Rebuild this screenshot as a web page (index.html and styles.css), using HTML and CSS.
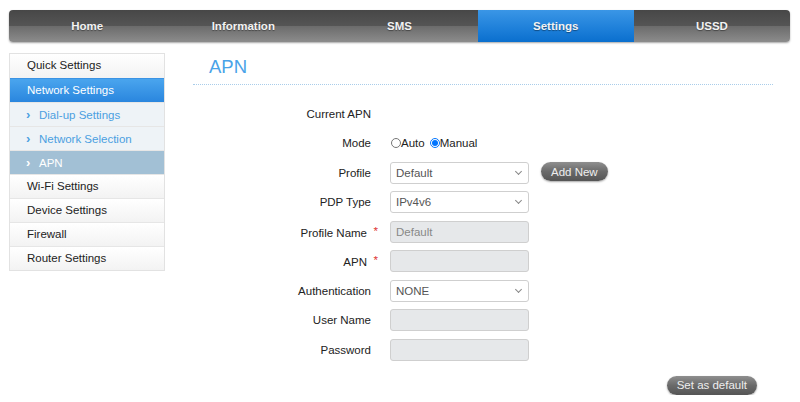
FILE: index.html
```html
<!DOCTYPE html>
<html lang="en">
<head>
  <meta charset="UTF-8">
  <meta name="viewport" content="width=device-width, initial-scale=1.0">
  <title>APN</title>
  <link rel="stylesheet" href="styles.css">
</head>
<body>

  <ul class="nav">
    <li>Home</li>
    <li>Information</li>
    <li>SMS</li>
    <li class="active">Settings</li>
    <li>USSD</li>
  </ul>

  <div class="page">
    <ul class="side">
      <li class="item">Quick Settings</li>
      <li class="item open">Network Settings</li>
      <li class="sub"><span class="arrow">›</span>Dial-up Settings</li>
      <li class="sub"><span class="arrow">›</span>Network Selection</li>
      <li class="sub current"><span class="arrow">›</span>APN</li>
      <li class="item">Wi-Fi Settings</li>
      <li class="item">Device Settings</li>
      <li class="item">Firewall</li>
      <li class="item">Router Settings</li>
    </ul>

    <div class="content">
      <h1>APN</h1>

      <div class="form">
        <div class="row">
          <label>Current APN</label>
          <span></span>
        </div>
        <div class="row">
          <label>Mode</label>
          <div class="radios">
            <input type="radio" name="mode" id="auto"><span>Auto</span>
            <input type="radio" name="mode" id="manual" checked><span>Manual</span>
          </div>
        </div>
        <div class="row">
          <label>Profile</label>
          <div class="field">
            <span class="select"><select><option>Default</option></select></span>
            <button class="btn add">Add New</button>
          </div>
        </div>
        <div class="row">
          <label>PDP Type</label>
          <span class="select"><select><option>IPv4v6</option></select></span>
        </div>
        <div class="row">
          <label>Profile Name<i class="req">*</i></label>
          <input type="text" value="Default" disabled>
        </div>
        <div class="row">
          <label>APN<i class="req">*</i></label>
          <input type="text" disabled>
        </div>
        <div class="row">
          <label>Authentication</label>
          <span class="select"><select><option>NONE</option></select></span>
        </div>
        <div class="row">
          <label>User Name</label>
          <input type="text" disabled>
        </div>
        <div class="row">
          <label>Password</label>
          <input type="password" disabled>
        </div>
      </div>

      <div class="actions">
        <button class="btn">Set as default</button>
      </div>
    </div>
  </div>

</body>
</html>
```

FILE: styles.css
```css
body {
  margin: 0;
  padding: 10px 10px 0 9px;
  font-family: "Liberation Sans", Arial, sans-serif;
  font-size: 11.5px;
  color: #333;
  background: #fff;
}
ul {
  list-style: none;
  margin: 0;
  padding: 0;
}
.nav {
  display: flex;
  height: 32px;
  border-radius: 4px;
  overflow: hidden;
  background: linear-gradient(#474747, #555 50%, #6b6b6b 50%, #8c8c8c);
  box-shadow: 0 1px 2px rgba(0, 0, 0, 0.35);
}
.nav li {
  flex: 1;
  display: flex;
  align-items: center;
  justify-content: center;
  color: #f2f2f2;
  font-weight: bold;
  font-size: 11.5px;
  text-shadow: 0 1px 1px rgba(0, 0, 0, 0.4);
}
.nav li.active {
  background: linear-gradient(#3a96e6, #1d7fd9 60%, #0a6fce);
}
.page {
  display: flex;
  align-items: flex-start;
}
.side {
  width: 154px;
  margin-top: 11px;
  border: 1px solid #e2e2e2;
}
.side li {
  height: 23px;
  line-height: 23px;
  border-top: 1px solid #e6e6e6;
}
.side li:first-child {
  border-top: none;
  height: 24px;
}
.item {
  padding-left: 17px;
  background: linear-gradient(#fff, #f3f3f3);
  color: #222;
}
.item.open {
  background: linear-gradient(#4aa5ee, #2a86de);
  color: #fff;
  border-top-color: #3b93e4;
}
.sub {
  padding-left: 16px;
  background: #eef3f7;
  color: #4b9fe1;
}
.sub.current {
  background: #a2c0d5;
  color: #fff;
}
.arrow {
  display: inline-block;
  width: 13px;
  font-weight: bold;
  font-size: 13px;
}
.content {
  flex: 1;
  padding: 0 17px 0 28px;
}
h1 {
  margin: 0;
  padding: 14px 0 0 16px;
  height: 28px;
  font-size: 18.5px;
  font-weight: normal;
  color: #4aa3e8;
  border-bottom: 1px dotted #a9cdea;
}
.form {
  margin-top: 14px;
}
.row {
  display: flex;
  align-items: center;
  height: 29.5px;
}
.row label {
  width: 178px;
  padding-right: 9px;
  text-align: right;
  color: #222;
}
.req {
  display: inline-block;
  width: 13px;
  margin-right: -9px;
  padding-right: 2px;
  box-sizing: border-box;
  text-align: right;
  color: #d33;
  font-style: normal;
  vertical-align: 2px;
}
.row label + * {
  margin-left: 10px;
}
.radios {
  display: flex;
  align-items: center;
  color: #222;
}
.radios input {
  width: 10px;
  height: 10px;
  margin: 0 0 0 1px;
}
.radios span {
  margin-right: 4px;
}
.field {
  display: flex;
  align-items: center;
}
.select {
  position: relative;
  display: inline-block;
  height: 22px;
}
.select::after {
  content: "";
  position: absolute;
  right: 8px;
  top: 7px;
  width: 4px;
  height: 4px;
  border-right: 1px solid #888;
  border-bottom: 1px solid #888;
  transform: rotate(45deg);
  pointer-events: none;
}
select,
input[type="text"],
input[type="password"] {
  box-sizing: border-box;
  width: 139px;
  height: 22px;
  padding: 0 5px;
  font-family: inherit;
  font-size: 11.5px;
  color: #555;
  border: 1px solid #cfcfcf;
  border-radius: 3px;
  background-color: #fff;
}
select {
  appearance: none;
  -webkit-appearance: none;
  margin: 0;
  display: block;
}
input:disabled {
  background: #e6e8ea;
  color: #888;
}
.btn {
  height: 19px;
  padding: 0 10px;
  border: none;
  border-radius: 10px;
  font-family: inherit;
  font-size: 11.5px;
  color: #eee;
  background: linear-gradient(#8f8f8f, #6a6a6a 50%, #555);
  box-shadow: 0 1px 2px rgba(0, 0, 0, 0.35);
}
.add {
  margin-left: 12px;
  margin-top: -2px;
}
.actions {
  display: flex;
  justify-content: flex-end;
  padding: 11px 16px 0 0;
}
```
